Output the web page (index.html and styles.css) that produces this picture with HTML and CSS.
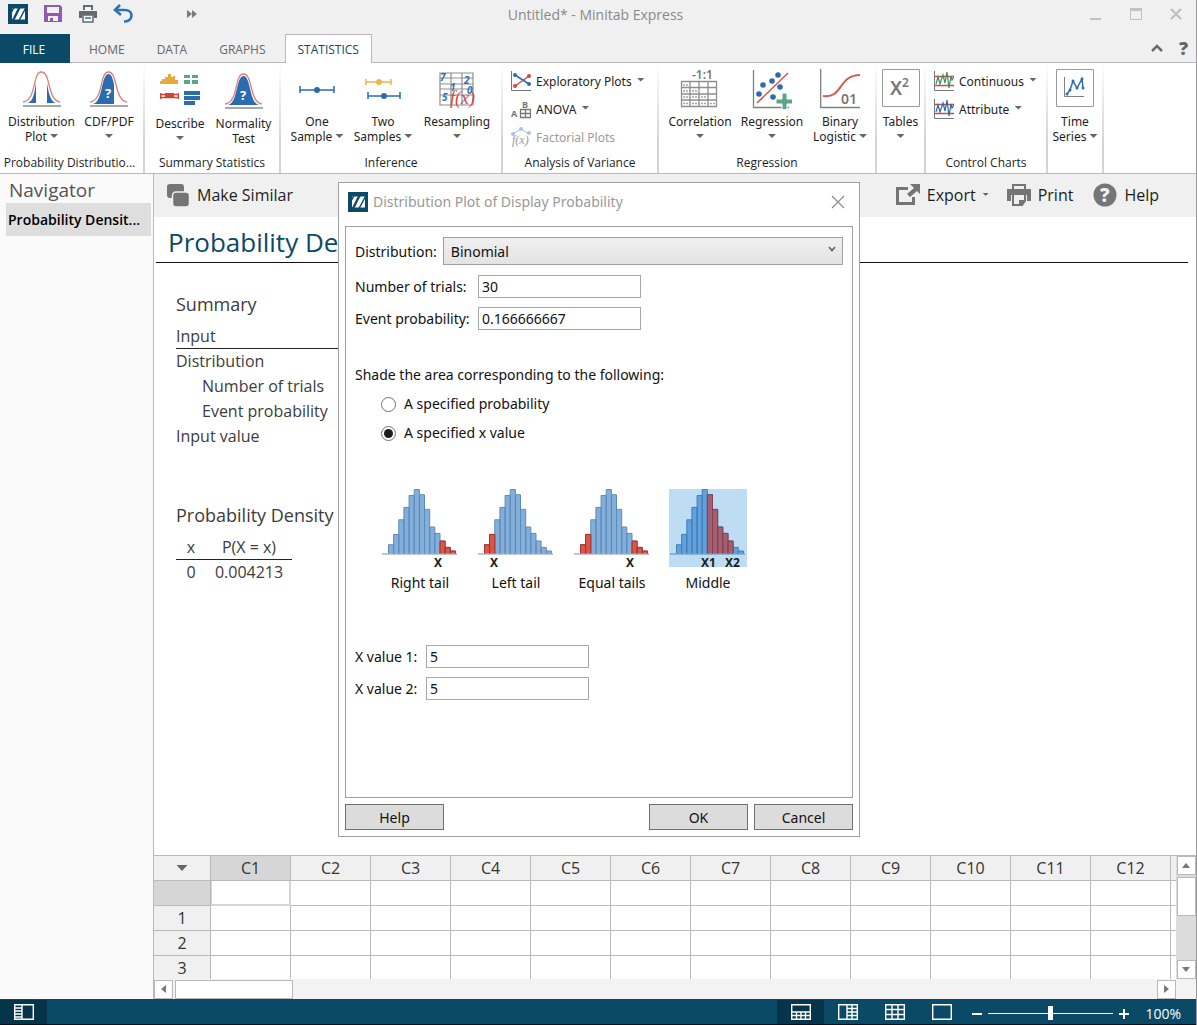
FILE: index.html
```html
<!DOCTYPE html>
<html lang="en">
<head>
<meta charset="utf-8">
<title>Untitled* - Minitab Express</title>
<link rel="stylesheet" href="styles.css">
</head>
<body>
<svg class="defs" aria-hidden="true">
  <defs>
    <symbol id="logo" viewBox="0 0 20 20">
      <path fill="#0b4a66" d="M0 0h20v20H0z"/>
      <path fill="#fff" d="M4 4.500h13v11H4z"/>
      <path stroke="#0b4a66" stroke-width="1.500" d="M11 3.500L4.500 16.500M12 3.500L5.500 16.500M18 3.500L11 16.500M6 3.500L2.500 10"/>
    </symbol>
    <symbol id="histogram" viewBox="0 0 78 78">
      <path d="M7.5 64.5V55.7h5.1V64.5M12.6 64.5V45.4h5.2V64.5M17.8 64.5V30.8h5.1V64.5M22.9 64.5V18.4h5.2V64.5M28.1 64.5V6.5h5.1V64.5M33.2 64.5V.6h5.2V64.5M38.4 64.5V5.8h5.1V64.5M43.5 64.5V20.4h5.2V64.5M48.7 64.5V38h5.1V64.5M53.8 64.5V44.4h5.2V64.5M59 64.5V52h5.1V64.5M64.1 64.5V58.4h5.2V64.5M69.3 64.5V62h5.1V64.5"/>
    </symbol>
    <symbol id="left-red" viewBox="0 0 78 78"><path d="M7.5 64.5V55.7h5.1V64.5M12.6 64.5V45.4h5.2V64.5"/></symbol>
    <symbol id="right-red" viewBox="0 0 78 78"><path d="M59 64.500V52h5.100V64.500M64.100 64.500V58.400h5.200V64.500M69.300 64.500V62h5.100V64.500"/></symbol>
  </defs>
</svg>

<div class="app">
  <header class="titlebar">
    <div class="quick">
      <svg width="20" height="20"><use href="#logo"/></svg>
      <button class="plain" aria-label="Save"><svg width="20" height="20" viewBox="0 0 20 20"><path fill="#8e5bb0" fill-rule="evenodd" d="M1 1h16l2 2v15H1zM4 3v6h12V3zM5 12v5h2v-3h3v3h5v-5z"/></svg></button>
      <button class="plain" aria-label="Print"><svg width="20" height="20" viewBox="0 0 20 20"><path fill="#696969" d="M5 1h10v5H5zM1 7h18v7h-3v-3H4v3H1z"/><path fill="#eef5fb" d="M7 3h6v4H7z"/><path fill="#fff" stroke="#696969" stroke-width="1.5" d="M5 11h10v7H5z"/><path stroke="#2a6cb4" stroke-width="1.5" d="M7 14h6"/></svg></button>
      <button class="plain" aria-label="Undo"><svg width="20" height="20" viewBox="0 0 20 20"><path fill="none" stroke="#2d72b5" stroke-width="2.6" d="M2 6h10c4 0 6.500 2.500 6.500 5.500S16 17.500 12 17.500h-1"/><path fill="none" stroke="#2d72b5" stroke-width="2.600" d="M7 1L2 6l6 5"/></svg></button>
      <button class="plain more" aria-label="More commands"><svg width="12" height="8" viewBox="0 0 12 8"><path fill="#7a7a7a" d="M1 0l5 4-5 4zM6 0l5 4-5 4z"/></svg></button>
    </div>
    <div class="window-title">Untitled* - Minitab Express</div>
    <div class="window-controls">
      <button class="plain" aria-label="Minimize"><svg width="14" height="14" viewBox="0 0 14 14"><path fill="#c2c2c2" d="M1 11h11v2H1z"/></svg></button>
      <button class="plain" aria-label="Maximize"><svg width="14" height="14" viewBox="0 0 14 14"><path fill="none" stroke="#c2c2c2" d="M1.500 1.500h11v11h-11z"/><path fill="#c2c2c2" d="M1 1h12v3H1z"/></svg></button>
      <button class="plain" aria-label="Close"><svg width="14" height="14" viewBox="0 0 14 14"><path stroke="#bebebe" stroke-width="2" d="M2 2l10 10M12 2L2 12"/></svg></button>
    </div>
  </header>

  <nav class="tabs">
    <button class="tab tab-file">FILE</button>
    <button class="tab">HOME</button>
    <button class="tab">DATA</button>
    <button class="tab">GRAPHS</button>
    <button class="tab tab-active">STATISTICS</button>
    <div class="tabs-end">
      <button class="plain" aria-label="Collapse ribbon"><svg width="12" height="8" viewBox="0 0 12 8"><path fill="none" stroke="#6b6b6b" stroke-width="2.500" d="M1 7l5-5 5 5"/></svg></button>
      <button class="plain help-mark">?</button>
    </div>
  </nav>

  <section class="ribbon">
    <div class="group g-prob">
      <div class="tools">
        <button class="tool w75"><svg width="40" height="40" viewBox="0 0 40 40"><path fill="#2b6cb0" d="M5 34c5-1 7-6 9-20v20zM25 14c2 14 5 19 9 20h-9z"/><path fill="none" stroke="#de7f78" stroke-width="1.300" d="M1 33c14-2 9-30 18.500-30S25 31 38 33"/><path stroke="#8b8b8b" stroke-width="1.300" d="M1 37h38"/></svg><span>Distribution<br>Plot <i class="caret"></i></span></button>
        <button class="tool w60"><svg width="40" height="40" viewBox="0 0 40 40"><path fill="#2b6cb0" d="M4 35c10-2 8-30 15.500-30 3 0 4 4 5.500 10v20z"/><path fill="none" stroke="#de7f78" stroke-width="1.300" d="M1 33c14-2 9-30 18.500-30S25 31 38 33"/><path stroke="#8b8b8b" stroke-width="1.300" d="M1 37h38"/><text class="icon-q" x="16" y="29">?</text></svg><span>CDF/PDF<br><i class="caret"></i></span></button>
      </div>
      <div class="group-name">Probability Distributio...</div>
    </div>
    <div class="group g-summary">
      <div class="tools tools-low">
        <button class="tool w63"><svg width="40" height="40" viewBox="0 0 40 40"><path fill="#e6a93c" d="M0 13v-3h2V8h3V6h3V3h3v3h2V5h2v4h3v4z"/><path fill="#56a886" d="M24 4h6v3h-6zM32 4h6v3h-6zM24 9h6v4h-6zM32 9h6v4h-6z"/><path stroke="#cf4237" stroke-width="1.300" d="M0 26.500h19M0 23.500h19M.700 22v6M18.300 22v6"/><path fill="#cf4237" d="M5 22h9v4H5z"/><path fill="#2b6cb0" d="M24 20h16v4H24zM24 25h16v4H24zM24 30h11v4H24z"/></svg><span>Describe<br><i class="caret"></i></span></button>
        <button class="tool w64"><svg width="40" height="40" viewBox="0 0 40 40"><path fill="#2b6cb0" d="M4 34C14 32 12 5 19.500 5S25 32 35 34z"/><path fill="none" stroke="#de7f78" stroke-width="1.300" d="M1 33c14-2 9-30 18.500-30S25 31 38 33"/><path stroke="#8b8b8b" stroke-width="1.300" d="M1 37h38"/><text class="icon-q" x="16" y="29">?</text></svg><span>Normality<br>Test</span></button>
      </div>
      <div class="group-name">Summary Statistics</div>
    </div>
    <div class="group g-inference">
      <div class="tools">
        <button class="tool w66"><svg width="40" height="40" viewBox="0 0 40 40"><path stroke="#2b6cb0" stroke-width="1.500" d="M3 21h34M3 17v7M37 17v7"/><circle cx="20" cy="21" r="3" fill="#2b6cb0"/></svg><span>One<br>Sample <i class="caret"></i></span></button>
        <button class="tool w66"><svg width="40" height="40" viewBox="0 0 40 40"><path stroke="#f0b351" stroke-width="1.500" d="M3 13h25M3 10v6M28 10v6"/><circle cx="16" cy="13" r="3" fill="#f0b351"/><path stroke="#2b6cb0" stroke-width="1.500" d="M5 27h32M5 23v7M37 23v7"/><circle cx="21" cy="27" r="3" fill="#2b6cb0"/></svg><span>Two<br>Samples <i class="caret"></i></span></button>
        <button class="tool w82"><svg width="40" height="40" viewBox="0 0 40 40"><path fill="none" stroke="#8e8e8e" stroke-width="1.200" d="M3 4h33v32H3zM3 9h33M3 15h33M3 20h33M3 26h33M14 4v32M25 4v32"/><g fill="#2f6fb6"><text class="icon-n" x="3" y="12">7</text><text class="icon-n" x="27" y="15">2</text><text class="icon-n" x="13" y="22">1</text><text class="icon-n" x="5" y="32">5</text><text class="icon-n" x="30" y="25">0</text></g><text class="icon-fx" x="13" y="35">f(x)</text></svg><span>Resampling<br><i class="caret"></i></span></button>
      </div>
      <div class="group-name">Inference</div>
    </div>
    <div class="group g-anova">
      <div class="rows">
        <button class="row-tool"><svg width="20" height="20" viewBox="0 0 20 20"><path fill="none" stroke="#777" d="M.500 0v19.500H20"/><path stroke="#d8463c" stroke-width="1.500" d="M4 15L18 5"/><path stroke="#2b6cb0" stroke-width="1.500" d="M4 4l14 9"/><g fill="#2b6cb0"><circle cx="4" cy="4" r="2"/><circle cx="18" cy="13" r="2"/></g><g fill="#d8463c"><circle cx="4" cy="15" r="2"/><circle cx="18" cy="5" r="2"/></g></svg><span>Exploratory Plots</span><i class="caret"></i></button>
        <button class="row-tool"><svg width="20" height="20" viewBox="0 0 20 20"><path fill="none" stroke="#777" stroke-width="1.300" d="M9.500 10.500h10v8h-10zM9.500 14.500h10M14.500 10.500v8"/><text class="icon-ab" x="0" y="18">A</text><text class="icon-ab" x="11" y="9">B</text></svg><span>ANOVA</span><i class="caret"></i></button>
        <button class="row-tool" disabled><svg width="20" height="20" viewBox="0 0 20 20"><path fill="none" stroke="#aac5df" d="M2 7l8-5 8 5"/><g fill="#aac5df"><circle cx="2" cy="7" r="2"/><circle cx="10" cy="2" r="2"/><circle cx="18" cy="6" r="2"/></g><text class="icon-fg" x="1" y="17">f(x)</text></svg><span>Factorial Plots</span></button>
      </div>
      <div class="group-name">Analysis of Variance</div>
    </div>
    <div class="group g-regression">
      <div class="tools">
        <button class="tool w72"><svg width="40" height="40" viewBox="0 0 40 40"><text class="icon-r" x="12" y="10">-1:1</text><path fill="none" stroke="#8e8e8e" stroke-width="1.300" d="M1.500 12.500h35v25h-35zM1.500 18.500h35M1.500 25h35M1.500 31h35M10 12.500v25M19 12.500v25M28 12.500v25"/><path fill="none" stroke="#a3a3a3" stroke-width="1.500" stroke-dasharray="2 1" d="M3 16h6M3 22h15M3 28h24M3 34.500h32"/></svg><span>Correlation<br><i class="caret"></i></span></button>
        <button class="tool w72"><svg width="40" height="40" viewBox="0 0 40 40"><path fill="none" stroke="#808080" stroke-width="1.300" d="M1.500 1v37.500H37"/><path stroke="#d8463c" stroke-width="1.300" d="M5 34L36 4"/><g fill="#2b6cb0"><circle cx="26" cy="6" r="2.800"/><circle cx="20" cy="12" r="2.800"/><circle cx="11" cy="16" r="2.800"/><circle cx="28" cy="18" r="2.800"/><circle cx="7" cy="25" r="2.800"/><circle cx="21" cy="28" r="2.800"/></g><path fill="#56a886" stroke="#fff" d="M30 24h5v6h6v5h-6v6h-5v-6h-6v-5h6z"/></svg><span>Regression<br><i class="caret"></i></span></button>
        <button class="tool w64"><svg width="40" height="40" viewBox="0 0 40 40"><path fill="none" stroke="#808080" stroke-width="1.300" d="M.700 0v38.500H40"/><path fill="none" stroke="#d65a50" stroke-width="2" d="M3 27c20 3 15-21 37-21"/><text class="icon-01" x="21" y="35">01</text></svg><span>Binary<br>Logistic <i class="caret"></i></span></button>
      </div>
      <div class="group-name">Regression</div>
    </div>
    <div class="group g-tables">
      <div class="tools">
        <button class="tool w48"><svg width="40" height="40" viewBox="0 0 40 40"><path fill="#fff" stroke="#9a9a9a" d="M1.500.500h37v37h-37z"/><text class="icon-x" x="9" y="26">X</text><text class="icon-2" x="21" y="18">2</text></svg><span>Tables<br><i class="caret"></i></span></button>
      </div>
    </div>
    <div class="group g-control">
      <div class="rows">
        <button class="row-tool"><svg width="20" height="20" viewBox="0 0 20 20"><path fill="none" stroke="#777" d="M.500 0v19.500H20"/><path stroke="#d8463c" stroke-width="1.300" d="M1 5.500h19M1 14.500h19"/><path fill="none" stroke="#3c8f63" stroke-width="1.200" d="M2 13l2-7 2 7 3-9 2 8 2-11 2 16 2-12 1 4 2-3"/></svg><span>Continuous</span><i class="caret"></i></button>
        <button class="row-tool"><svg width="20" height="20" viewBox="0 0 20 20"><path fill="none" stroke="#777" d="M.500 0v19.500H20"/><path stroke="#d8463c" stroke-width="1.300" d="M1 5.500h19M1 14.500h19"/><path fill="none" stroke="#2b6cb0" stroke-width="1.200" d="M2 13l2-7 2 7 3-9 2 8 2-11 2 16 2-12 1 4 2-3"/></svg><span>Attribute</span><i class="caret"></i></button>
      </div>
      <div class="group-name">Control Charts</div>
    </div>
    <div class="group g-time">
      <div class="tools">
        <button class="tool w55"><svg width="40" height="40" viewBox="0 0 40 40"><path fill="#fff" stroke="#9a9a9a" d="M1.500.500h37v37h-37z"/><path fill="none" stroke="#808080" d="M9.500 8v19.500H29"/><path fill="none" stroke="#2b6cb0" stroke-width="1.500" d="M12 25l3-4 3-9 4 7 5-9 1 9"/><g fill="#2b6cb0"><circle cx="12" cy="25" r="1.500"/><circle cx="15" cy="21" r="1.500"/><circle cx="18" cy="12" r="1.500"/><circle cx="22" cy="19" r="1.500"/><circle cx="27" cy="10" r="1.500"/><circle cx="28" cy="19" r="1.500"/></g></svg><span>Time<br>Series <i class="caret"></i></span></button>
      </div>
    </div>
  </section>

  <div class="workspace">
    <aside class="navigator">
      <h2>Navigator</h2>
      <a class="nav-item" href="#report">Probability Densit...</a>
    </aside>
    <main class="main">
      <div class="toolbar">
        <button class="plain tb"><svg width="24" height="24" viewBox="0 0 24 24"><rect x="1" y="1" width="17" height="14" rx="3" fill="#757575"/><rect x="6.500" y="9" width="17" height="15" rx="3.500" fill="#757575" stroke="#f0f0f0" stroke-width="1.500"/></svg><span>Make Similar</span></button>
        <div class="tb-right">
          <button class="plain tb"><svg width="24" height="24" viewBox="0 0 24 24"><path fill="none" stroke="#757575" stroke-width="3" d="M12 5.500H1.500v15h16V14"/><path fill="#757575" d="M14 1h10v10l-3-3-7 6-3-3 7-6z"/></svg><span>Export</span><i class="caret caret-small"></i></button>
          <button class="plain tb"><svg width="24" height="24" viewBox="0 0 24 24"><path fill="none" stroke="#757575" stroke-width="2" d="M6 6V2h12v4"/><path fill="#757575" d="M0 6h24v12h-4v-6H4v6H0z"/><path fill="#f0f0f0" stroke="#757575" stroke-width="2" d="M6 11h12v7l-3 4H6z"/><path fill="#757575" d="M12 22v-5h6v2l-3 3z"/></svg><span>Print</span></button>
          <button class="plain tb tb-help"><svg width="24" height="24" viewBox="0 0 24 24"><circle cx="12" cy="12" r="11.500" fill="#757575"/><text class="icon-help" x="7" y="19">?</text></svg><span>Help</span></button>
        </div>
      </div>
      <article class="report" id="report">
        <h1>Probability Density Function</h1>
        <h3>Summary</h3>
        <table class="inputs">
          <tr><th>Input</th></tr>
          <tr><td>Distribution</td></tr>
          <tr><td class="sub">Number of trials</td></tr>
          <tr><td class="sub">Event probability</td></tr>
          <tr><td>Input value</td></tr>
        </table>
        <h3>Probability Density Function</h3>
        <table class="density">
          <tr><th>x</th><th>P(X = x)</th></tr>
          <tr><td>0</td><td>0.004213</td></tr>
        </table>
      </article>
      <div class="sheet">
        <div class="sheet-grid">
          <table class="cells">
            <colgroup><col class="c-head"><col span="12" class="c-data"><col></colgroup>
            <thead><tr><th><i class="caret caret-wide"></i></th><th class="picked">C1</th><th>C2</th><th>C3</th><th>C4</th><th>C5</th><th>C6</th><th>C7</th><th>C8</th><th>C9</th><th>C10</th><th>C11</th><th>C12</th><th></th></tr></thead>
            <tbody>
              <tr><th class="picked"></th><td class="current"></td><td></td><td></td><td></td><td></td><td></td><td></td><td></td><td></td><td></td><td></td><td></td><td></td></tr>
              <tr><th>1</th><td></td><td></td><td></td><td></td><td></td><td></td><td></td><td></td><td></td><td></td><td></td><td></td><td></td></tr>
              <tr><th>2</th><td></td><td></td><td></td><td></td><td></td><td></td><td></td><td></td><td></td><td></td><td></td><td></td><td></td></tr>
              <tr><th>3</th><td></td><td></td><td></td><td></td><td></td><td></td><td></td><td></td><td></td><td></td><td></td><td></td><td></td></tr>
            </tbody>
          </table>
        </div>
        <div class="vscroll">
          <button class="sbtn" aria-label="Scroll up"><svg width="8" height="5" viewBox="0 0 8 5"><path fill="#777" d="M0 5l4-5 4 5z"/></svg></button>
          <div class="vthumb"></div>
          <button class="sbtn sbtn-end" aria-label="Scroll down"><svg width="8" height="5" viewBox="0 0 8 5"><path fill="#777" d="M0 0l4 5 4-5z"/></svg></button>
        </div>
        <div class="hscroll">
          <button class="sbtn" aria-label="Scroll left"><svg width="5" height="8" viewBox="0 0 5 8"><path fill="#777" d="M5 0L0 4l5 4z"/></svg></button>
          <div class="hthumb"></div>
          <button class="sbtn sbtn-right" aria-label="Scroll right"><svg width="5" height="8" viewBox="0 0 5 8"><path fill="#777" d="M0 0l5 4-5 4z"/></svg></button>
        </div>
      </div>
    </main>
  </div>

  <footer class="statusbar">
    <button class="view active" aria-label="Navigator pane"><svg width="20" height="18" viewBox="0 0 20 18"><path fill="none" stroke="#fff" stroke-width="1.400" d="M.700 1.700h18.600v14.600H.700zM8 2v14M1 5h7M1 8h7M1 11h7M1 14h7"/></svg></button>
    <div class="views">
      <button class="view active" aria-label="Stacked view"><svg width="20" height="18" viewBox="0 0 20 18"><path fill="none" stroke="#fff" stroke-width="1.400" d="M.700 1.700h18.600v14.600H.700zM1 9h18M1 12.500h18M5.500 9v7M10 9v7M14.500 9v7"/></svg></button>
      <button class="view" aria-label="Split view"><svg width="20" height="18" viewBox="0 0 20 18"><path fill="none" stroke="#fff" stroke-width="1.400" d="M.700 1.700h18.600v14.600H.700zM9 2v14M14 2v14M9 5.500h10M9 9h10M9 12.500h10"/></svg></button>
      <button class="view" aria-label="Data view"><svg width="20" height="18" viewBox="0 0 20 18"><path fill="none" stroke="#fff" stroke-width="1.400" d="M.700 1.700h18.600v14.600H.700zM1 6.500h18M1 11.500h18M7 2v14M13 2v14"/></svg></button>
      <button class="view" aria-label="Output view"><svg width="20" height="18" viewBox="0 0 20 18"><path fill="none" stroke="#fff" stroke-width="1.400" d="M.700 1.700h18.600v14.600H.700z"/></svg></button>
    </div>
    <button class="plain zoom-btn" aria-label="Zoom out"><svg width="10" height="10" viewBox="0 0 10 10"><path stroke="#fff" stroke-width="2" d="M0 5h10"/></svg></button>
    <input class="zoom" type="range" aria-label="Zoom" min="0" max="100" value="50">
    <button class="plain zoom-btn" aria-label="Zoom in"><svg width="10" height="10" viewBox="0 0 10 10"><path stroke="#fff" stroke-width="2" d="M0 5h10M5 0v10"/></svg></button>
    <span class="zoom-value">100%</span>
  </footer>

  <div class="overlay">
    <form class="dialog" role="dialog" aria-labelledby="dialog-title">
      <div class="dialog-head">
        <svg width="20" height="20"><use href="#logo"/></svg>
        <span id="dialog-title">Distribution Plot of Display Probability</span>
        <button type="button" class="plain" aria-label="Close dialog"><svg width="14" height="14" viewBox="0 0 14 14"><path stroke="#8c8c8c" stroke-width="1.200" d="M1 1l12 12M13 1L1 13"/></svg></button>
      </div>
      <div class="dialog-body">
        <div class="field field-select">
          <label for="dist">Distribution:</label>
          <div class="select-wrap"><select id="dist"><option>Binomial</option></select><svg width="8" height="6" viewBox="0 0 8 6"><path fill="none" stroke="#5c5c5c" stroke-width="1.500" d="M1 1l3 3.500L7 1"/></svg></div>
        </div>
        <div class="field field-wide"><label for="trials">Number of trials:</label><input id="trials" type="text" value="30"></div>
        <div class="field field-wide"><label for="prob">Event probability:</label><input id="prob" type="text" value="0.166666667"></div>
        <fieldset class="shade">
          <legend>Shade the area corresponding to the following:</legend>
          <label><input type="radio" name="shade">A specified probability</label>
          <label><input type="radio" name="shade" checked>A specified x value</label>
        </fieldset>
        <div class="tails">
          <button type="button" class="plain tail"><svg width="78" height="78" viewBox="0 0 78 78"><use class="bars" href="#histogram"/><use class="bars-red" href="#right-red"/><path stroke="#808b96" d="M1 65h75"/><text class="mark" x="53" y="78">X</text></svg><span>Right tail</span></button>
          <button type="button" class="plain tail"><svg width="78" height="78" viewBox="0 0 78 78"><use class="bars" href="#histogram"/><use class="bars-red" href="#left-red"/><path stroke="#808b96" d="M1 65h75"/><text class="mark" x="13" y="78">X</text></svg><span>Left tail</span></button>
          <button type="button" class="plain tail"><svg width="78" height="78" viewBox="0 0 78 78"><use class="bars" href="#histogram"/><use class="bars-red" href="#left-red"/><use class="bars-red" href="#right-red"/><path stroke="#808b96" d="M1 65h75"/><text class="mark" x="53" y="78">X</text></svg><span>Equal tails</span></button>
          <button type="button" class="plain tail" aria-pressed="true"><svg class="chosen" width="78" height="78" viewBox="0 0 78 78"><use class="bars bars-deep" href="#histogram"/><path fill="#a3616f" stroke="#873f52" d="M38.400 64.500V5.800h5.100V64.500M43.500 64.500V20.400h5.200V64.500M48.700 64.500V38h5.100V64.500M53.800 64.500V44.400h5.200V64.500M59 64.500V52h5.100V64.500"/><path stroke="#5f86ad" d="M1 65h75"/><text class="mark" x="32" y="78">X1</text><text class="mark" x="56" y="78">X2</text></svg><span>Middle</span></button>
        </div>
        <div class="field field-short"><label for="x1">X value 1:</label><input id="x1" type="text" value="5"></div>
        <div class="field field-short"><label for="x2">X value 2:</label><input id="x2" type="text" value="5"></div>
      </div>
      <div class="dialog-foot">
        <button type="button" class="push">Help</button>
        <button type="button" class="push push-ok">OK</button>
        <button type="button" class="push">Cancel</button>
      </div>
    </form>
  </div>
</div>
</body>
</html>
```
FILE: styles.css
```css
* { box-sizing: border-box; }
body { margin: 0; font-family: "Open Sans", "Noto Sans", sans-serif; font-size: 14px; color: #1e1e1e; background: #fff; }
button, input, select { font: inherit; color: inherit; }
button { cursor: default; }
svg { display: block; flex: none; }
.defs { position: absolute; width: 0; height: 0; }
.plain { border: 0; padding: 0; background: none; }
.app { position: relative; display: flex; flex-direction: column; min-height: 100vh; border-right: 1px solid #9a9a9a; }

/* Title bar */
.titlebar { display: grid; grid-template-columns: 1fr auto 1fr; align-items: center; height: 34px; padding: 0 13px 6px 8px; background: #f0f0f0; }
.quick { display: flex; align-items: center; gap: 15px; }
.more { margin-left: 38px; }
.window-title { padding-top: 2px; color: #8a8a8a; line-height: 20px; }
.window-controls { display: flex; gap: 26px; justify-content: flex-end; }

/* Tabs */
.tabs { display: flex; height: 29px; background: #f0f0f0; border-bottom: 1px solid #b9b9b9; font-size: 12px; }
.tab { height: 29px; padding: 2px 19px 0; border: 0; background: none; color: #666; line-height: 27px; }
.tab:nth-child(3) { padding: 2px 13px 0; }
.tab-file { width: 70px; padding: 2px 2px 0 0; background: #0b4a66; color: #fff; }
.tab-active { padding: 0 12px; border: 1px solid #b9b9b9; border-bottom: 0; background: #fff; color: #0b4a66; }
.tabs-end { display: flex; align-items: center; gap: 16px; margin-left: auto; padding-right: 8px; }
.help-mark { color: #666; font-size: 18px; font-weight: 800; line-height: 20px; }

/* Ribbon */
.ribbon { display: flex; height: 111px; background: #fff; border-bottom: 1px solid #b9b9b9; font-size: 12px; }
.group { display: flex; flex-direction: column; justify-content: space-between; flex: none; padding: 6px 0 1px; border-right: 2px solid; border-image: linear-gradient(#fff, #d4d4d4 70%) 1; }
.g-prob { width: 145px; }
.g-summary { width: 136px; }
.g-inference { width: 222px; }
.g-anova { width: 156px; }
.g-regression { width: 218px; }
.g-tables { width: 49px; }
.g-control { width: 122px; }
.g-time { width: 56px; }
.tools { display: flex; justify-content: center; }
.tools, .rows { font-family: "Noto Sans", "Open Sans", sans-serif; }
.tools-low { padding-top: 2px; }
.g-regression .tools { padding-left: 2px; }
.tool { display: flex; flex-direction: column; align-items: center; gap: 5px; padding: 0; border: 0; background: none; line-height: 15px; white-space: nowrap; }
.w48 { width: 47px; }
.w55 { width: 54px; }
.w60 { width: 60px; }
.w63 { width: 63px; }
.w64 { width: 64px; }
.w66 { width: 66px; }
.w72 { width: 72px; }
.w75 { width: 75px; }
.w82 { width: 82px; }
.caret { display: inline-block; flex: none; width: 8px; height: 4px; vertical-align: 3px; background: #666; clip-path: polygon(0 0, 100% 0, 50% 100%); }
.row-tool .caret { margin-bottom: 3px; }
.caret-small { width: 6px; height: 3px; }
.caret-wide { width: 11px; height: 6px; }
.group-name { line-height: 18px; text-align: center; white-space: nowrap; }
.g-prob .group-name { padding-right: 4px; }
.rows { display: flex; flex-direction: column; gap: 8px; padding: 2px 0 0 8px; }
.row-tool { display: flex; align-items: center; gap: 5px; height: 20px; padding: 0; border: 0; background: none; white-space: nowrap; }
.row-tool:disabled { color: #9b9b9b; }
.icon-q { fill: #fff; font-size: 13px; font-weight: 700; }
.icon-n { font-size: 10px; font-weight: 700; font-style: italic; }
.icon-fx { fill: #d8463c; font: italic 18px "Liberation Serif", serif; }
.icon-fg { fill: #999; font: italic 12px "Liberation Serif", serif; }
.icon-ab { fill: #777; font-size: 9px; font-weight: 700; }
.icon-r, .icon-01 { fill: #777; font-size: 12px; font-weight: 600; }
.icon-01 { font-size: 14px; }
.icon-x { fill: #777; font-size: 19px; font-weight: 600; }
.icon-2 { fill: #777; font-size: 12px; font-weight: 600; }
.icon-help { fill: #f0f0f0; font-size: 19px; font-weight: 800; }

/* Workspace */
.workspace { display: flex; flex: 1; }
.navigator { flex: none; width: 154px; padding: 3px 2px 0 6px; background: #fafafa; border-right: 1px solid #b9b9b9; }
.navigator h2 { margin: 0; padding-left: 3px; color: #555; font-size: 19px; font-weight: 400; line-height: 26px; }
.nav-item { display: block; padding-left: 2px; background: #dedede; color: #000; font-weight: 600; line-height: 33px; text-decoration: none; white-space: nowrap; }
.main { display: flex; flex: 1; flex-direction: column; min-width: 0; }
.toolbar { display: flex; align-items: center; justify-content: space-between; height: 43px; padding: 0 37px 2px 12px; background: #f0f0f0; font-size: 16px; }
.tb { display: flex; align-items: center; gap: 7px; line-height: 24px; }
.tb-right { display: flex; gap: 18px; }
.tb-help { margin-left: 2px; }
.report { flex: 1; padding: 7px 8px 0 2px; color: #3c3c3c; font-size: 16px; }
.report h1 { margin: 0 0 24px; padding: 0 0 2px 12px; border-bottom: 1px solid #111; color: #0b4a66; font-size: 26px; font-weight: 400; line-height: 36px; }
.report h3 { margin: 0 0 3px; padding-left: 20px; font-size: 18px; font-weight: 400; line-height: 34px; }
.report table { margin-left: 20px; border-spacing: 0; }
.report td { height: 25px; padding: 0; line-height: 25px; }
.report th { height: 25px; padding: 0; border-bottom: 1px solid #222; font-weight: 400; line-height: 24px; }
.inputs { width: 300px; margin-bottom: 49px; text-align: left; }
.report .sub { padding-left: 26px; }
.density { width: 116px; text-align: center; }
.density th:first-child { width: 30px; }

/* Worksheet */
.sheet { display: grid; grid-template: 123px 20px / minmax(0, 1fr) 20px; border-top: 1px solid #b9b9b9; background: #f3f3f3; }
.sheet-grid { overflow: hidden; }
.cells { width: 100%; border-spacing: 0; table-layout: fixed; background: #fff; font-size: 16px; }
.c-head { width: 57px; }
.c-data { width: 80px; }
.cells th, .cells td { height: 25px; padding: 0; border-right: 1px solid #b9b9b9; border-bottom: 1px solid #b9b9b9; line-height: 24px; }
.cells th { background: #f0f0f0; color: #333; font-weight: 400; text-align: center; }
.cells tr > :last-child { border-right: 0; }
.cells .picked { background: #d6d6d6; }
.cells .current { border-color: #d6d6d6; box-shadow: inset 1px 0 #d6d6d6, inset -1px -1px #d6d6d6; }
.vscroll { display: flex; flex-direction: column; align-items: center; gap: 2px; background: #dcdcdc; }
.sbtn { display: flex; align-items: center; justify-content: center; flex: none; width: 19px; height: 19px; padding: 0; border: 1px solid #b9b9b9; background: #fff; }
.sbtn-end { margin-top: auto; }
.vthumb { width: 19px; height: 39px; border: 1px solid #b9b9b9; background: #fff; }
.hscroll { display: flex; align-items: center; gap: 2px; }
.hthumb { width: 118px; height: 19px; border: 1px solid #b9b9b9; background: #fff; }
.sbtn-right { margin-left: auto; }

/* Status bar */
.statusbar { display: flex; align-items: center; height: 26px; padding-right: 15px; background: #0b4a66; border-bottom: 1px solid #001018; color: #fff; }
.view { display: flex; align-items: center; justify-content: center; width: 47px; height: 24px; padding: 0; border: 0; background: none; }
.active { background: #06344a; }
.views { display: flex; margin: 0 7px 0 auto; }
.zoom-btn { padding: 4px 0 0; }
.zoom { width: 125px; height: 16px; margin: 3px 6px 0; appearance: none; background: linear-gradient(#fff, #fff) center / 100% 1px no-repeat; }
.zoom::-webkit-slider-thumb { appearance: none; width: 5px; height: 14px; background: #fff; }
.zoom-value { margin-left: 16px; padding-top: 3px; }

/* Dialog */
.overlay { position: absolute; inset: 0; display: flex; align-items: flex-start; justify-content: center; padding: 182px 0 0 2px; }
.dialog { width: 522px; padding: 0 6px 6px; border: 1px solid #a0a0a0; background: #fff; color: #111; font-family: "Noto Sans", "Open Sans", sans-serif; }
.dialog-head { display: flex; align-items: center; gap: 5px; height: 43px; padding: 0 8px 6px 3px; color: #999; }
.dialog-head .plain { margin-left: auto; }
.dialog-body { display: flex; flex-direction: column; gap: 9px; height: 572px; padding: 10px 9px; border: 1px solid #a0a0a0; }
.field { display: flex; align-items: center; }
.field-select { gap: 6px; margin-bottom: 1px; }
.select-wrap { display: grid; flex: 1; align-items: center; }
.select-wrap select, .select-wrap svg { grid-area: 1 / 1; }
.select-wrap svg { justify-self: end; margin: 0 7px 4px 0; pointer-events: none; }
.select-wrap select { width: 100%; height: 28px; padding: 0 7px; appearance: none; border: 1px solid #a0a0a0; border-radius: 0; background: linear-gradient(#f0f0f0, #e3e3e3); }
.field input { width: 163px; height: 23px; padding: 0 3px; border: 1px solid #a5a5ad; background: #fff; }
.field-wide label { width: 123px; }
.field-short label { width: 71px; }
.shade { display: flex; flex-direction: column; gap: 9px; margin: 26px 0 0; padding: 0; border: 0; line-height: 20px; }
.shade legend { margin-bottom: 9px; padding: 0; }
.shade label { display: flex; align-items: center; gap: 8px; padding-left: 26px; }
.shade input { display: grid; place-content: center; width: 15px; height: 15px; margin: 0; appearance: none; border: 1px solid #707070; border-radius: 50%; background: #fff; }
.shade input:checked::before { content: ""; width: 9px; height: 9px; border-radius: 50%; background: #1c1c1c; }
.tails { display: flex; gap: 18px; margin: 37px 0 43px 26px; }
.tail { display: flex; flex-direction: column; align-items: center; gap: 6px; width: 78px; line-height: 20px; white-space: nowrap; }
.chosen { background: #bedcf4; }
.bars { fill: #85afdb; stroke: #5c8abb; stroke-width: 1px; }
.bars-deep { fill: #62a1da; stroke: #3f7fbd; }
.bars-red { fill: #d9574a; stroke: #a92f27; stroke-width: 1px; }
.mark { fill: #1c1c1c; font-size: 12px; font-weight: 700; }
.dialog-foot { display: flex; gap: 6px; padding-top: 6px; }
.push { width: 99px; height: 26px; padding: 0; border: 1px solid #707070; background: #dcdcdc; }
.push-ok { margin-left: auto; }
```
